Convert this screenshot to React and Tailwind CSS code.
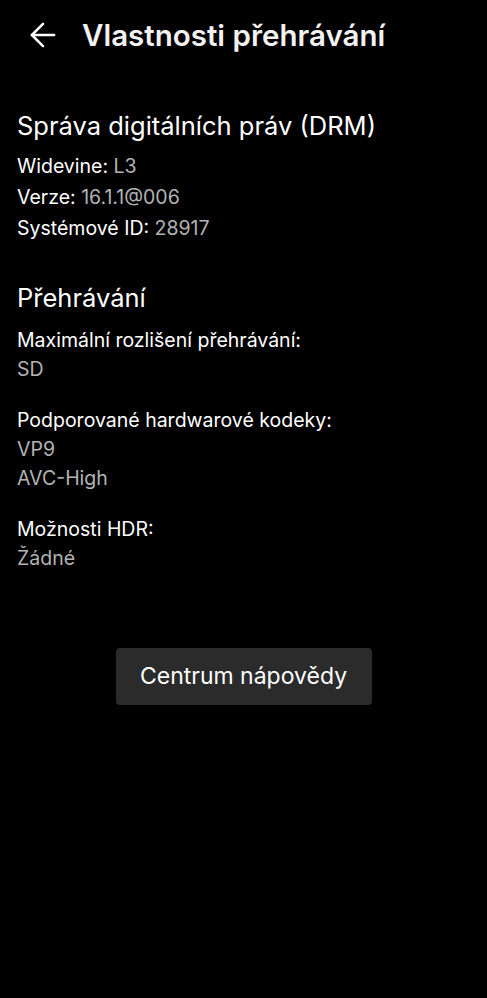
import { ArrowLeft } from "lucide-react";

const font = { fontFamily: "Inter, 'Noto Sans', sans-serif" };

function Row({ label, value }) {
  return (
    <p className="text-[19.5px] leading-[31px] text-white">
      {label} <span className="text-[#b3b3b3]">{value}</span>
    </p>
  );
}

function Field({ label, values }) {
  return (
    <div>
      <p className="text-[19.5px] leading-[30px] text-white">{label}</p>
      {values.map((v) => (
        <p key={v} className="text-[19.5px] leading-[29px] text-[#b3b3b3]">
          {v}
        </p>
      ))}
    </div>
  );
}

export default function App() {
  return (
    <div className="min-h-screen bg-black text-white" style={font}>
      <header className="flex h-[70px] items-center pl-[24px]">
        <ArrowLeft className="h-[38px] w-[38px] text-white" strokeWidth={1.6} />
        <h1 className="ml-[20px] text-[29.5px] font-semibold text-[#f2f2f2]">
          Vlastnosti přehrávání
        </h1>
      </header>

      <section className="mt-[38px] px-[17px]">
        <h2 className="text-[25.5px] leading-[36px]">Správa digitálních práv (DRM)</h2>
        <div className="mt-[7px]">
          <Row label="Widevine:" value="L3" />
          <Row label="Verze:" value="16.1.1@006" />
          <Row label="Systémové ID:" value="28917" />
        </div>
      </section>

      <section className="mt-[36px] px-[17px]">
        <h2 className="text-[25.5px] leading-[36px]">Přehrávání</h2>
        <div className="mt-[9px] flex flex-col gap-[21px]">
          <Field label="Maximální rozlišení přehrávání:" values={["SD"]} />
          <Field label="Podporované hardwarové kodeky:" values={["VP9", "AVC-High"]} />
          <Field label="Možnosti HDR:" values={["Žádné"]} />
        </div>
      </section>

      <div className="mt-[75px] flex justify-center">
        <button className="h-[57px] w-[256px] rounded-[4px] bg-[#2b2b2b] text-[23px] text-white">
          Centrum nápovědy
        </button>
      </div>
    </div>
  );
}
